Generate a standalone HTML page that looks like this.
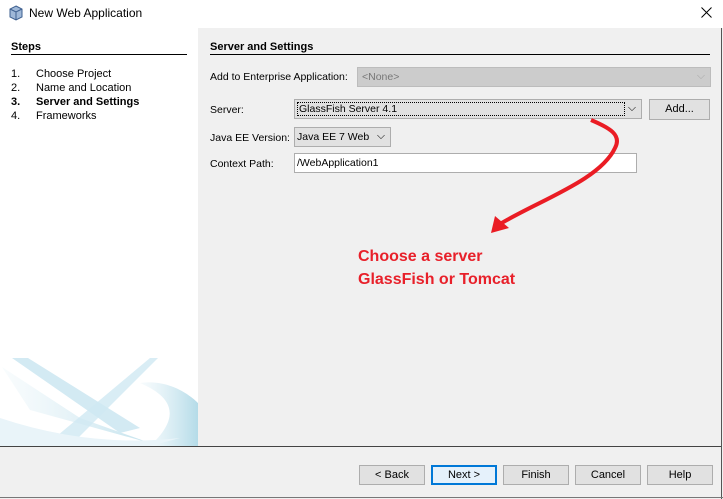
<!DOCTYPE html>
<html><head><style>
body{margin:0;width:723px;height:499px;overflow:hidden;background:#f0f0f0;font-family:"Liberation Sans",sans-serif;font-size:11px;color:#000;position:relative}
.a{position:absolute}
.btn{position:absolute;top:465px;width:66px;height:20px;border:1px solid #adadad;background:#e1e1e1;box-sizing:border-box;text-align:center;line-height:18px;font-size:11px}
.lbl{position:absolute;left:210px;font-size:10.5px}
</style></head><body>
<div class="a" style="left:0;top:0;width:723px;height:28px;background:#fff"></div>
<svg class="a" style="left:8px;top:5px" width="16" height="16" viewBox="0 0 16 16"><path d="M8 1L14 4V12L8 15L2 12V4Z" fill="#9fb8d8" stroke="#3d5f8f"/><path d="M2 4L8 7L14 4M8 7V15" stroke="#3d5f8f" fill="none"/></svg>
<div class="a" style="left:29px;top:6px;font-size:12px">New Web Application</div>
<svg class="a" style="left:701px;top:7px" width="11" height="11"><path d="M0.5 0.5L10.5 10.5M10.5 0.5L0.5 10.5" stroke="#000" stroke-width="1"/></svg>
<div class="a" style="left:0;top:28px;width:198px;height:418px;background:#fff"></div>
<svg class="a" style="left:0;top:358px" width="198" height="88" viewBox="0 0 198 88">
<defs><linearGradient id="g" x1="0" x2="1"><stop offset="0" stop-color="#d8ecf4" stop-opacity=".2"/><stop offset="1" stop-color="#b4dbe8"/></linearGradient></defs>
<path d="M2 9L80 60L150 85L30 52Z" fill="url(#g)" opacity=".8"/>
<path d="M12 0L28 0L140 70L120 75Z" fill="#d3eaf3"/>
<path d="M150 0L158 0L70 88L45 88Z" fill="#cfe8f2" opacity=".8"/>
<path d="M140 25C175 20 198 45 198 45V88H150C180 60 175 40 140 25Z" fill="url(#g)"/>
<path d="M0 60Q90 90 180 80L150 88H0Z" fill="#e9f4f9"/>
</svg>
<div class="a" style="left:11px;top:41px;font-weight:bold">Steps</div>
<div class="a" style="left:11px;top:54px;width:176px;border-top:1px solid #000"></div>
<div class="a" style="left:11px;top:67px;line-height:14px">1.<br>2.<br><b>3.</b><br>4.</div>
<div class="a" style="left:36px;top:67px;line-height:14px">Choose Project<br>Name and Location<br><b>Server and Settings</b><br>Frameworks</div>
<div class="a" style="left:210px;top:41px;font-weight:bold">Server and Settings</div>
<div class="a" style="left:210px;top:54px;width:500px;border-top:1px solid #000"></div>
<div class="lbl" style="top:71px">Add to Enterprise Application:</div>
<div class="a" style="left:357px;top:67px;width:354px;height:20px;background:#ccc;border:1px solid #bcbcbc;box-sizing:border-box;color:#777;padding:3px 4px;font-size:10.5px">&lt;None&gt;<span style="position:absolute;right:5px;top:2px;color:#aaa">⌵</span></div>
<div class="lbl" style="top:104px">Server:</div>
<div class="a" style="left:294px;top:99px;width:348px;height:20px;background:#e1e1e1;border:1px solid #adadad;box-sizing:border-box;padding:2px;font-size:10.5px"><div style="border:1px dotted #000;width:328px;height:14px;box-sizing:border-box;padding-left:1px;line-height:12px">GlassFish Server 4.1</div><span style="position:absolute;right:5px;top:2px">⌵</span></div>
<div class="a" style="left:649px;top:99px;width:61px;height:21px;background:#e1e1e1;border:1px solid #adadad;box-sizing:border-box;text-align:center;line-height:19px">Add...</div>
<div class="lbl" style="top:132px">Java EE Version:</div>
<div class="a" style="left:294px;top:127px;width:97px;height:20px;background:#e1e1e1;border:1px solid #adadad;box-sizing:border-box;padding:3px 2px;font-size:10.5px">Java EE 7 Web<span style="position:absolute;right:5px;top:2px">⌵</span></div>
<div class="lbl" style="top:158px">Context Path:</div>
<div class="a" style="left:294px;top:153px;width:343px;height:20px;background:#fff;border:1px solid #adadad;box-sizing:border-box;padding:3px 2px;font-size:10.5px">/WebApplication1</div>
<svg class="a" style="left:0;top:0" width="723" height="499"><path d="M591 120C610 128 622 135 615 148C600 180 540 200 500 224" stroke="#ea1c24" stroke-width="4" fill="none"/><path d="M491 233L495 216L509 228Z" fill="#ea1c24"/></svg>
<div class="a" style="left:358px;top:245px;color:#e8202a;font-weight:bold;font-size:16px;line-height:23px">Choose a server<br>GlassFish or Tomcat</div>
<div class="a" style="left:0;top:446px;width:722px;border-top:1px solid #444"></div>
<div class="a" style="left:721px;top:28px;height:471px;border-left:1px solid #555"></div>
<div class="a" style="left:0;top:497px;width:723px;border-top:1px solid #777"></div>
<div class="btn" style="left:359px">&lt; Back</div>
<div class="btn" style="left:431px;border:2px solid #0078d7;background:#e5f1fb;line-height:16px">Next &gt;</div>
<div class="btn" style="left:503px">Finish</div>
<div class="btn" style="left:575px">Cancel</div>
<div class="btn" style="left:647px">Help</div>
</body></html>
